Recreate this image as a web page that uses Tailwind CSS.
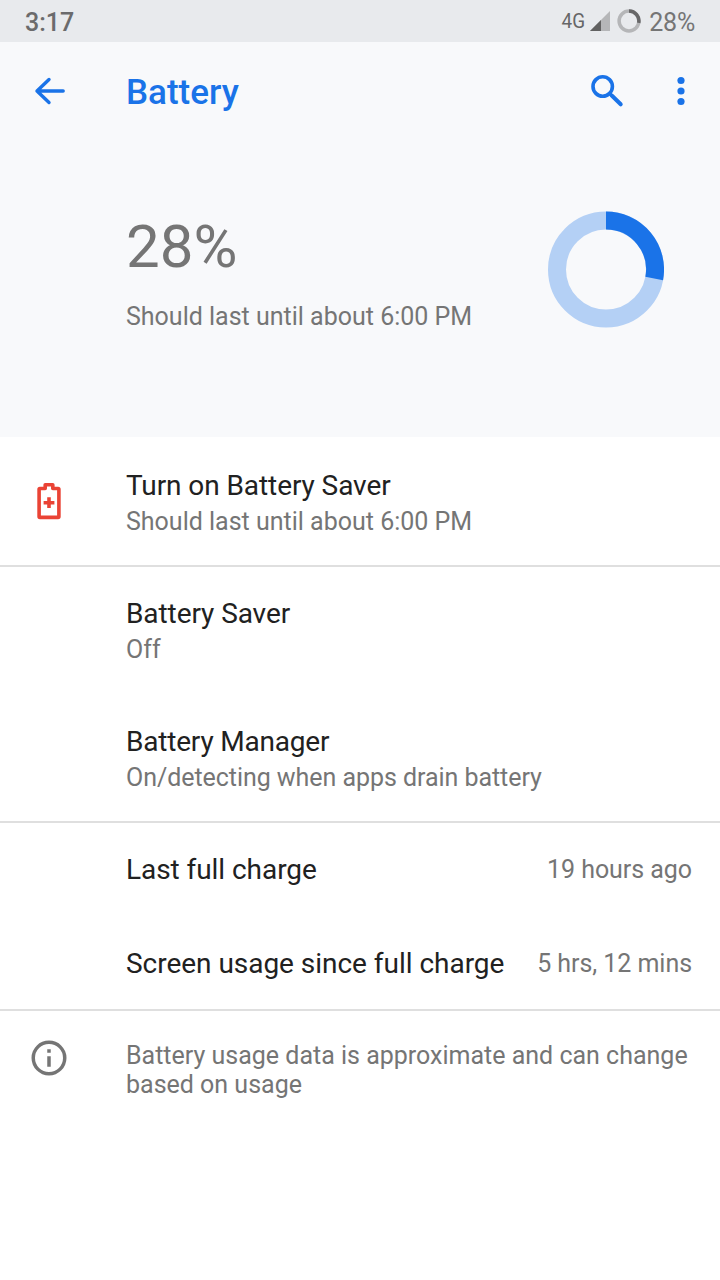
<!DOCTYPE html>
<html lang="en"><head><meta charset="utf-8"><title>Battery</title>
<script src="https://cdn.jsdelivr.net/npm/@tailwindcss/browser@4"></script></head>
<body class="w-[720px] h-[1280px] bg-white overflow-hidden font-[Roboto,sans-serif] text-[#757575]">
<header class="h-[42px] bg-[#e8eaed] flex items-center justify-between px-[25px] text-[25px] whitespace-nowrap">
<span class="pt-[3px] font-medium text-[#6b6b6c]">3:17</span>
<div class="flex items-center"><span class="inline-block origin-right scale-x-90 text-[21px] leading-none mr-[5px] text-[#666667]">4G</span>
<svg class="w-5 h-5 mr-[7px]" viewBox="0 0 20 20"><path d="M20 0V20H0Z" fill="#b5b6b8"/><path d="M11 9V20H0Z" fill="#616161"/></svg>
<svg class="w-6 h-6 mr-2 mb-px" viewBox="0 0 24 24" fill="none" stroke-width="3.500"><circle cx="12" cy="12" r="9.900" stroke="#b5b6b8"/><path d="M12 2.100A9.900 9.900 0 0 1 21.700 13.900" stroke="#666667"/></svg>
<span class="pt-[3px] tracking-[-0.2px]">28%</span></div>
</header>
<section class="h-[395px] bg-[#f8f9fb]">
<div class="h-[98px] flex items-center text-[#1a73e8]">
<svg class="w-12 h-12 ml-[26px]" viewBox="0 0 48 48" fill="none" stroke="currentColor" stroke-width="3.400" stroke-linecap="round" stroke-linejoin="round"><path d="M37.200 24H11M23 12.500 11 24l12 11.500"/></svg>
<h1 class="ml-[52px] text-[35px] font-medium leading-none flex-1 pt-[3px]">Battery</h1>
<svg class="w-11 h-11 mr-[30px]" viewBox="0 0 44 44" fill="none" stroke="currentColor" stroke-width="3.600"><circle cx="17.700" cy="17.500" r="9.700"/><path d="M24.500 24.300 27 26.800"/><path d="M27 26.800 35.700 35.300" stroke-width="4" stroke-linecap="round"/></svg>
<svg class="w-11 h-11 mr-[17px]" viewBox="0 0 44 44" fill="currentColor"><circle cx="22" cy="11.500" r="3.600"/><circle cx="22" cy="22" r="3.600"/><circle cx="22" cy="32.500" r="3.600"/></svg>
</div>
<div class="flex justify-between pl-[126px] pr-14 pt-[71px]">
<div class="whitespace-nowrap"><div class="text-[60px] leading-[72px]">28%</div><div class="text-[25px] leading-[30px] mt-[19px]">Should last until about 6:00 PM</div></div>
<svg class="w-[116px] h-[117px]" viewBox="0 -0.500 116 117" fill="none" stroke-width="18"><circle cx="58" cy="58" r="49" stroke="#b4d0f5"/><path d="M58 9A49 49 0 0 1 106.200 67" stroke="#1a73e8"/></svg>
</div>
</section>
<main class="whitespace-nowrap text-[25px] leading-[30px]">
<section class="h-[130px] border-b-2 border-[#dfdfdf] flex">
<div class="w-[126px] pl-[25px] pt-[40px]"><svg class="w-12 h-12" viewBox="0 0 48 48" fill="none" stroke="#ea4335" stroke-width="3.600" stroke-linejoin="round"><path d="M20.200 7.700h7.600v3.800h5.300q.8 0 .8.800v27.300q0 .8-.8.800H14.900q-.8 0-.8-.8V12.300q0-.8.8-.8h5.300z"/><path d="M24 20.300v10.800M18.600 25.700h10.800"/></svg></div>
<div class="pt-[32px]"><h2 class="text-[28px] leading-[34px] text-[#212121] tracking-[-0.08px]">Turn on Battery Saver</h2><p class="mt-1">Should last until about 6:00 PM</p></div>
</section>
<section class="h-[256px] border-b-2 border-[#dfdfdf] pl-[126px]">
<div class="h-32 pt-[30px]"><h2 class="text-[28px] leading-[34px] text-[#212121] tracking-[-0.08px]">Battery Saver</h2><p class="mt-1">Off</p></div>
<div class="h-32 pt-[30px]"><h2 class="text-[28px] leading-[34px] text-[#212121] tracking-[-0.2px]">Battery Manager</h2><p class="mt-1 tracking-[-0.05px]">On/detecting when apps drain battery</p></div>
</section>
<section class="h-[188px] border-b-2 border-[#dfdfdf] pl-[126px] pr-7">
<div class="h-[94px] flex items-center justify-between"><h2 class="text-[28px] text-[#212121] tracking-[-0.06px]">Last full charge</h2><p class="tracking-[-0.05px]">19 hours ago</p></div>
<div class="h-[94px] flex items-center justify-between"><h2 class="text-[28px] text-[#212121] tracking-[-0.03px]">Screen usage since full charge</h2><p class="tracking-[-0.05px]">5 hrs, 12 mins</p></div>
</section>
<section class="flex">
<div class="w-[126px] pl-7 pt-[26px]"><svg class="w-[42px] h-[42px]" viewBox="0 0 24 24" fill="currentColor"><path d="M11 17h2v-6h-2v6zm1-15a10 10 0 1 0 0 20 10 10 0 0 0 0-20zm0 18a8 8 0 1 1 0-16 8 8 0 0 1 0 16zM11 9h2V7h-2v2z"/></svg></div>
<p class="pt-[30px] leading-[29px]">Battery usage data is approximate and can change<br>based on usage</p>
</section>
</main>
</body></html>
